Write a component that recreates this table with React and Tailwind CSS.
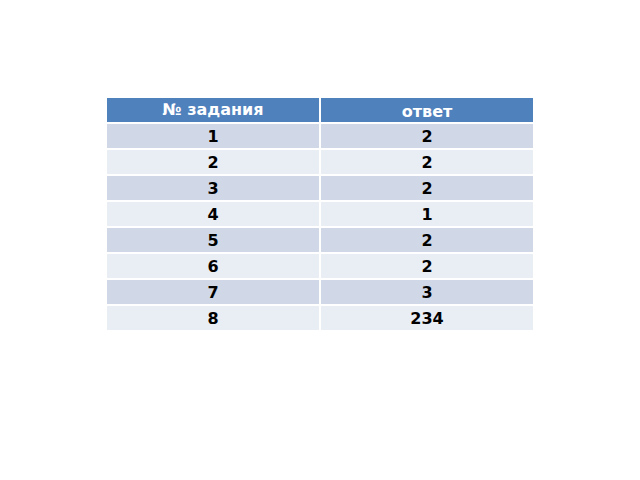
export default function App() {
  const rows = [
    ["1", "2"],
    ["2", "2"],
    ["3", "2"],
    ["4", "1"],
    ["5", "2"],
    ["6", "2"],
    ["7", "3"],
    ["8", "234"],
  ];
  const cell = "h-[24px] text-black font-bold text-[16px] flex items-center justify-center leading-none pt-[2px] ";
  return (
    <div className="w-[640px] h-[480px] bg-white" style={{ fontFamily: '"DejaVu Sans", sans-serif' }}>
      <div className="pt-[98px] pl-[107px]">
        <div className="grid grid-cols-[212px_212px] gap-[2px] w-[426px]">
          <div className="h-[24px] bg-[#4f81bd] text-white font-bold text-[16px] flex items-center justify-center leading-none">№ задания</div>
          <div className="h-[24px] bg-[#4f81bd] text-white font-bold text-[16px] flex items-center justify-center leading-none pt-[3px]">ответ</div>
          {rows.map((r, i) => {
            const bg = i % 2 === 0 ? "bg-[#d0d8e8]" : "bg-[#e9edf4]";
            return [
              <div key={"a" + i} className={cell + bg}>{r[0]}</div>,
              <div key={"b" + i} className={cell + bg}>{r[1]}</div>,
            ];
          })}
        </div>
      </div>
    </div>
  );
}
